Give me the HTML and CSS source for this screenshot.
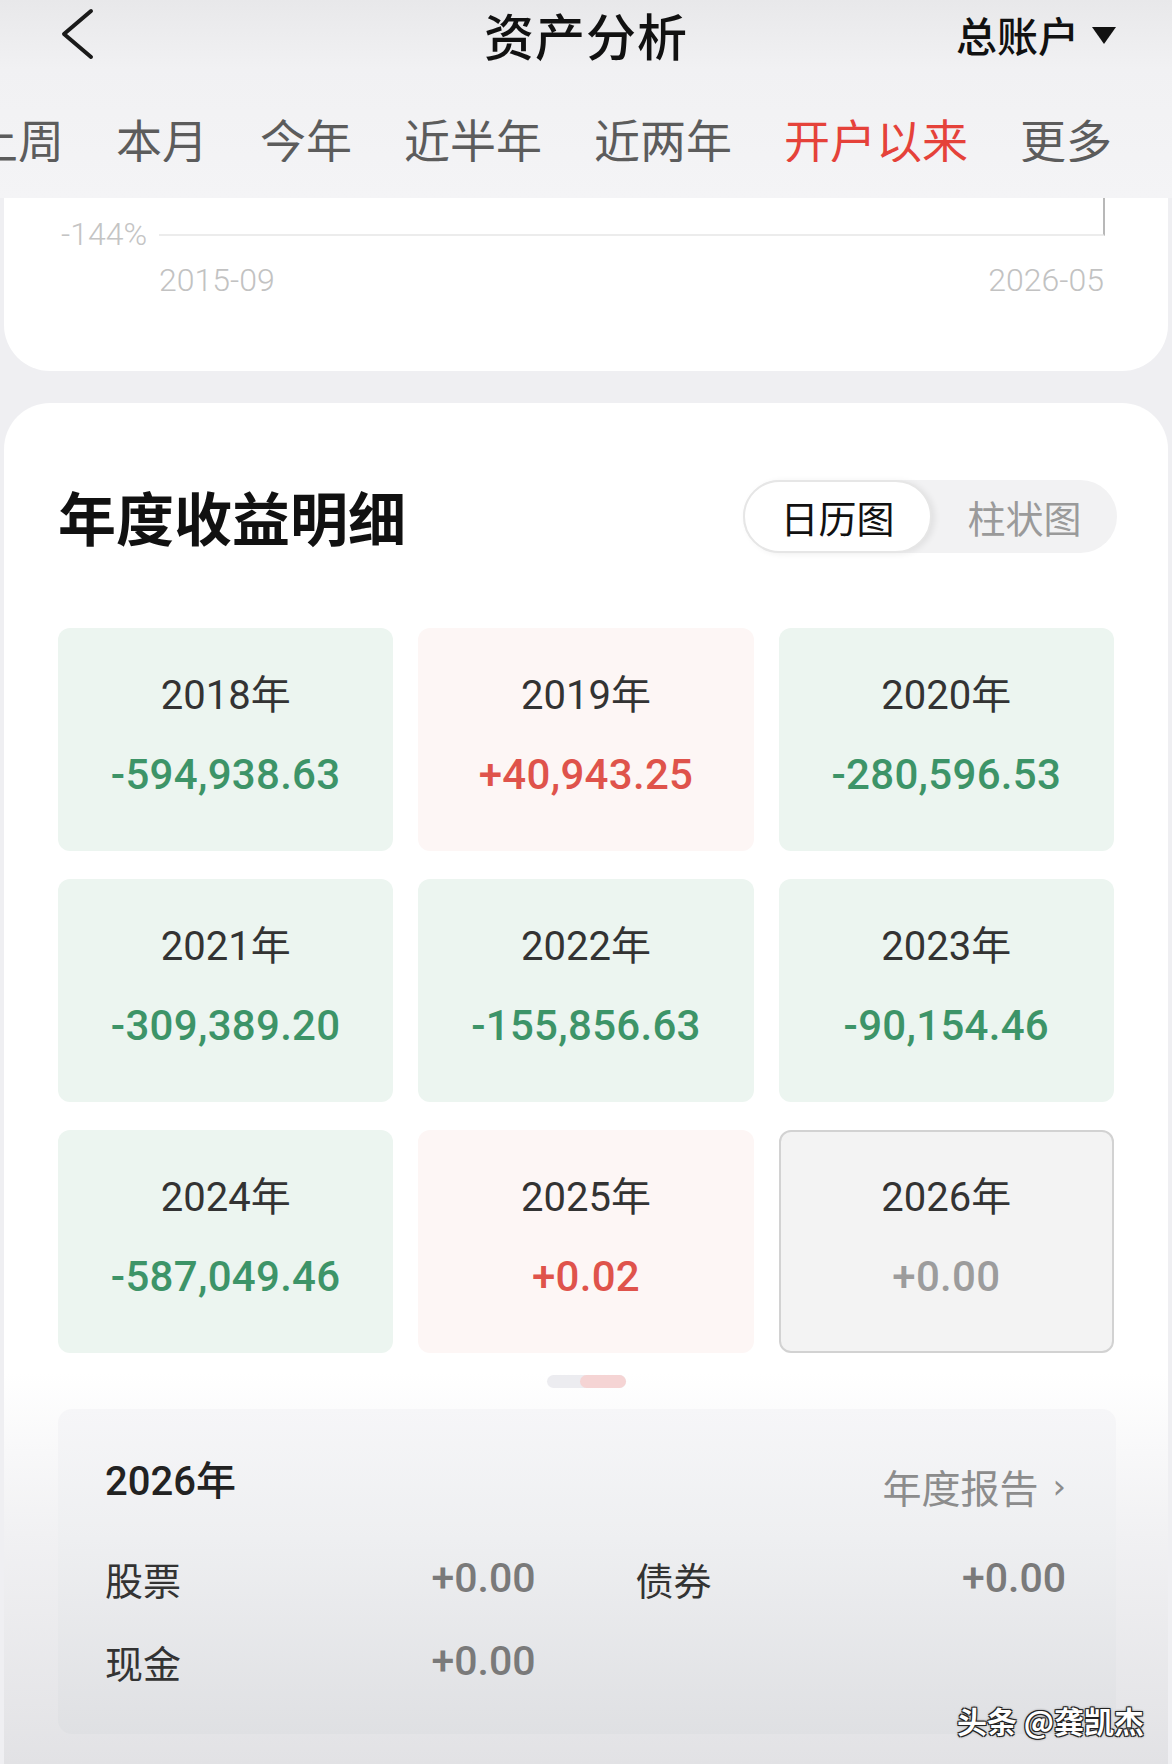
FILE: index.html
```html
<!DOCTYPE html>
<html lang="zh-CN">
<head>
<meta charset="utf-8">
<title>资产分析</title>
<link rel="stylesheet" href="styles.css">
</head>
<body>
<div class="screen">
  <header class="topbar">
    <div class="navbar">
      <div class="nav-left">
        <svg class="back" width="34" height="52" viewBox="0 0 34 52"><path d="M31 3 L4 26 L31 49" fill="none" stroke="#1a1a1a" stroke-width="4" stroke-linecap="round" stroke-linejoin="round"/></svg>
      </div>
      <h1 class="title">资产分析</h1>
      <div class="nav-right">
        <span class="account">总账户</span>
        <svg class="caret" width="26" height="20" viewBox="0 0 26 20"><path d="M1 2 H25 L13 19 Z" fill="#111"/></svg>
      </div>
    </div>
    <div class="tabs-viewport">
      <nav class="tabs">
        <span class="tab">上周</span>
        <span class="tab">本月</span>
        <span class="tab">今年</span>
        <span class="tab">近半年</span>
        <span class="tab">近两年</span>
        <span class="tab active">开户以来</span>
        <span class="tab">更多</span>
      </nav>
    </div>
  </header>

  <section class="chart-card">
    <div class="chart-row">
      <span class="axis-label">-144%</span>
      <div class="plot"></div>
    </div>
    <div class="dates">
      <span>2015-09</span>
      <span>2026-05</span>
    </div>
  </section>

  <section class="detail-card">
    <div class="detail-head">
      <h2 class="detail-title">年度收益明细</h2>
      <div class="toggle">
        <span class="toggle-item on">日历图</span>
        <span class="toggle-item">柱状图</span>
      </div>
    </div>

    <div class="year-grid">
      <div class="year-card loss"><div class="year">2018年</div><div class="amount">-594,938.63</div></div>
      <div class="year-card gain"><div class="year">2019年</div><div class="amount">+40,943.25</div></div>
      <div class="year-card loss"><div class="year">2020年</div><div class="amount">-280,596.53</div></div>
      <div class="year-card loss"><div class="year">2021年</div><div class="amount">-309,389.20</div></div>
      <div class="year-card loss"><div class="year">2022年</div><div class="amount">-155,856.63</div></div>
      <div class="year-card loss"><div class="year">2023年</div><div class="amount">-90,154.46</div></div>
      <div class="year-card loss"><div class="year">2024年</div><div class="amount">-587,049.46</div></div>
      <div class="year-card gain"><div class="year">2025年</div><div class="amount">+0.02</div></div>
      <div class="year-card flat selected"><div class="year">2026年</div><div class="amount">+0.00</div></div>
    </div>

    <div class="pager"><span class="pager-thumb"></span></div>

    <div class="summary">
      <div class="summary-head">
        <span class="summary-year">2026年</span>
        <span class="report">年度报告<span class="chev">›</span></span>
      </div>
      <div class="summary-grid">
        <div class="item"><span class="label">股票</span><span class="val">+0.00</span></div>
        <div class="item"><span class="label">债券</span><span class="val">+0.00</span></div>
        <div class="item"><span class="label">现金</span><span class="val">+0.00</span></div>
      </div>
    </div>
  </section>

  <div class="watermark">头条 @龚凯杰</div>
</div>
</body>
</html>
```

FILE: styles.css
```css
* { box-sizing: border-box; }

html, body {
  margin: 0;
  padding: 0;
}

body {
  width: 1172px;
  height: 1764px;
  overflow: hidden;
  background: #efeff2;
  font-family: "Noto Sans CJK SC", "Noto Sans", sans-serif;
  color: #222;
}

.screen {
  position: relative;
  width: 1172px;
  height: 1764px;
  overflow: hidden;
  display: flex;
  flex-direction: column;
}

/* ---------- top bar ---------- */
.topbar {
  height: 198px;
  background: linear-gradient(to bottom, #e8e8ea 0%, #f1f1f3 35%, #f4f4f6 100%);
  flex: none;
}

.navbar {
  height: 68px;
  display: grid;
  grid-template-columns: 1fr auto 1fr;
  align-items: center;
}

.nav-left {
  padding-left: 60px;
  display: flex;
  align-items: center;
}

.back { display: block; }

.title {
  margin: 0;
  font-size: 50px;
  line-height: 68px;
  font-weight: 500;
  color: #111;
  letter-spacing: 1px;
}

.nav-right {
  display: flex;
  align-items: center;
  justify-content: flex-end;
  padding-right: 55px;
  gap: 12px;
}

.account {
  font-size: 41px;
  line-height: 50px;
  font-weight: 500;
  color: #111;
}

.caret { display: block; margin-top: 2px; }

.tabs-viewport {
  overflow: hidden;
  padding-top: 46px;
}

.tabs {
  display: flex;
  gap: 52px;
  margin-left: -28px;
  white-space: nowrap;
}

.tab {
  font-size: 46px;
  line-height: 48px;
  color: #5c5c5c;
  flex: none;
}

.tab.active { color: #e5423a; }

/* ---------- chart card ---------- */
.chart-card {
  flex: none;
  height: 173px;
  margin: 0 4px;
  background: #fff;
  border-radius: 0 0 46px 46px;
}

.chart-row {
  display: flex;
  height: 38px;
  padding: 0 63px 0 57px;
}

.axis-label {
  flex: none;
  align-self: flex-end;
  margin-bottom: -10px;
  font-family: Roboto, sans-serif;
  font-weight: 300;
  font-size: 32px;
  line-height: 24px;
  color: #c4c4c4;
}

.plot {
  flex: 1;
  margin-left: 12px;
  height: 38px;
  border-bottom: 2px solid #ececec;
  border-right: 2px solid #b8b8b8;
}

.dates {
  display: flex;
  justify-content: space-between;
  margin-top: 26px;
  padding: 0 64px 0 155px;
  font-family: Roboto, sans-serif;
  font-weight: 300;
  font-size: 32px;
  line-height: 36px;
  color: #c2c2c2;
}

/* ---------- detail card ---------- */
.detail-card {
  flex: 1;
  margin: 32px 4px 0;
  background: linear-gradient(to bottom, #fff 0, #fff 970px, #f1f1f3 1130px, #e2e2e5 100%);
  border-radius: 46px 46px 0 0;
  padding: 77px 54px 0;
}

.detail-head {
  display: flex;
  align-items: center;
  justify-content: space-between;
  height: 73px;
}

.detail-title {
  margin: 0;
  font-size: 58px;
  line-height: 73px;
  font-weight: 700;
  color: #111;
}

.toggle {
  display: flex;
  width: 374px;
  height: 73px;
  margin-right: -3px;
  border-radius: 37px;
  background: #f2f2f3;
}

.toggle-item {
  flex: 1;
  display: flex;
  align-items: center;
  justify-content: center;
  font-size: 38px;
  color: #9a9a9a;
  border-radius: 37px;
}

.toggle-item.on {
  background: #fff;
  color: #111;
  border: 2px solid #e6e6e6;
  box-shadow: 3px 1px 6px rgba(0, 0, 0, 0.07);
}

.year-grid {
  margin-top: 75px;
  display: grid;
  grid-template-columns: repeat(3, 1fr);
  gap: 28px 25px;
}

.year-card {
  height: 223px;
  border-radius: 12px;
  display: flex;
  flex-direction: column;
  align-items: center;
  padding-top: 45px;
  font-family: Roboto, "Noto Sans CJK SC", sans-serif;
}

.year-card.loss { background: #ecf5f0; }
.year-card.gain { background: #fdf6f5; }
.year-card.flat { background: #f3f3f3; border: 2px solid #d2d2d2; padding-top: 43px; }

.year {
  font-size: 40px;
  line-height: 46px;
  color: #333;
}

.amount {
  margin-top: 33px;
  font-size: 42px;
  line-height: 46px;
  font-weight: 500;
  letter-spacing: 0.3px;
}

.loss .amount { color: #3d9468; }
.gain .amount { color: #df534b; }
.flat .amount { color: #9c9c9c; }

.pager {
  margin: 22px auto 0;
  width: 79px;
  height: 13px;
  border-radius: 7px;
  background: #ececf0;
  display: flex;
  justify-content: flex-end;
}

.pager-thumb {
  width: 46px;
  height: 13px;
  border-radius: 7px;
  background: #f5d4d4;
}

.summary {
  margin-top: 21px;
  margin-right: -2px;
  height: 325px;
  border-radius: 14px;
  background: linear-gradient(to bottom, #f6f6f8 0%, #eeeff1 40%, #dfe0e3 100%);
  padding: 43px 50px 0 47px;
}

.summary-head {
  display: flex;
  justify-content: space-between;
  height: 60px;
}

.summary-year {
  font-family: Roboto, "Noto Sans CJK SC", sans-serif;
  font-size: 40px;
  line-height: 60px;
  font-weight: 500;
  color: #222;
}

.report {
  margin-top: 8px;
  font-size: 39px;
  line-height: 60px;
  color: #8c8c8c;
  display: flex;
  align-items: center;
}

.chev {
  margin-left: 14px;
  font-family: "DejaVu Sans", sans-serif;
  font-size: 34px;
  color: #8c8c8c;
}

.summary-grid {
  margin-top: 38px;
  display: grid;
  grid-template-columns: 1fr 1fr;
  column-gap: 100px;
  row-gap: 27px;
}

.item {
  display: flex;
  justify-content: space-between;
  align-items: center;
  height: 56px;
}

.label {
  font-size: 38px;
  color: #333;
}

.val {
  font-family: Roboto, sans-serif;
  font-size: 41px;
  font-weight: 500;
  color: #7a7a7a;
}

.watermark {
  position: absolute;
  left: 957px;
  top: 1700px;
  font-size: 30px;
  line-height: 40px;
  font-weight: 700;
  color: #fff;
  text-shadow: -1px -1px 0 #222, 1px -1px 0 #222, -1px 1px 0 #222, 1px 1px 0 #222, 0 0 3px #000;
}
```
